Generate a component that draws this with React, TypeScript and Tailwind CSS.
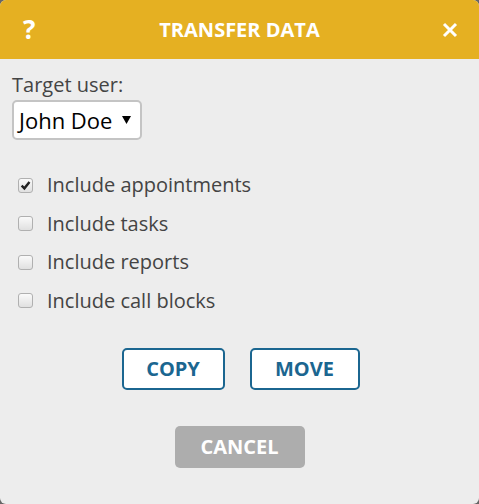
const options = [
  { label: 'Include appointments', checked: true },
  { label: 'Include tasks', checked: false },
  { label: 'Include reports', checked: false },
  { label: 'Include call blocks', checked: false },
]

const CheckRow = ({ label, checked }: any) => (
  <label className="flex items-center h-[38.5px]">
    <span className="ml-[6px] size-[15px] rounded-[3px] border border-[#b0b0b0] bg-gradient-to-b from-[#fafafa] to-[#e0e0e0] flex items-center justify-center">
      {checked && (
        <svg width="11" height="11" viewBox="0 0 10 10">
          <path d="M1.5 5.2 L4 7.6 L8.6 1.8" stroke="#222" strokeWidth="2.2" fill="none" />
        </svg>
      )}
    </span>
    <span className="ml-[14px] text-[20px] text-[#444]">{label}</span>
  </label>
)

export default function App() {
  return (
    <div className="w-[479px] h-[504px] bg-[#666]" style={{ fontFamily: '"Open Sans", sans-serif' }}>
      <div className="w-full h-full bg-[#ededed] rounded-[6px] overflow-hidden flex flex-col">
        <div className="h-[59px] bg-[#e5b022] flex items-center justify-between px-[23px] text-white font-bold">
          <span className="text-[26px] w-[14px]">?</span>
          <span className="text-[20px]">TRANSFER DATA</span>
          <svg width="16" height="16" viewBox="0 0 16 16" className="mr-[-2px]">
            <path d="M2 2 L14 14 M14 2 L2 14" stroke="white" strokeWidth="3" />
          </svg>
        </div>
        <div className="px-[12px] pt-[13px]">
          <div className="text-[20px] text-[#444] leading-[26px]">Target user:</div>
          <div className="mt-[2px] w-[130px] h-[40px] bg-white border-2 border-[#c4c4c4] rounded-[5px] flex items-center justify-between pl-[5px] pr-[9px]">
            <span className="text-[22px] text-black">John Doe</span>
            <svg width="9" height="9" viewBox="0 0 9 9" className="mb-[2px]">
              <path d="M0 1 L9 1 L4.5 9 Z" fill="black" />
            </svg>
          </div>
          <div className="mt-[26px] flex flex-col">
            {options.map((o) => (
              <CheckRow key={o.label} {...o} />
            ))}
          </div>
        </div>
        <div className="flex justify-center gap-[25px] mt-[28px] ml-[2px]">
          <button className="w-[103px] h-[42px] bg-white border-2 border-[#1b6690] rounded-[5px] text-[#1b6690] font-bold text-[20px]">COPY</button>
          <button className="w-[110px] h-[42px] bg-white border-2 border-[#1b6690] rounded-[5px] text-[#1b6690] font-bold text-[20px]">MOVE</button>
        </div>
        <div className="flex justify-center mt-[36px]">
          <button className="w-[130px] h-[42px] bg-[#adadad] rounded-[5px] text-white font-bold text-[20px]">CANCEL</button>
        </div>
      </div>
    </div>
  )
}
